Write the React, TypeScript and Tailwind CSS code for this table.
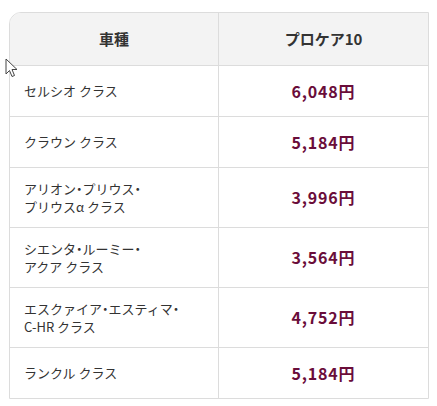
const rows: { name: string[]; price: string }[] = [
  { name: ["セルシオ クラス"], price: "6,048円" },
  { name: ["クラウン クラス"], price: "5,184円" },
  { name: ["アリオン・プリウス・", "プリウスα クラス"], price: "3,996円" },
  { name: ["シエンタ・ルーミー・", "アクア クラス"], price: "3,564円" },
  { name: ["エスクァイア・エスティマ・", "C-HR クラス"], price: "4,752円" },
  { name: ["ランクル クラス"], price: "5,184円" },
];

// 中黒はプロポーショナル幅で詰める
const Line: React.FC<{ text: string }> = ({ text }) => (
  <span className="whitespace-nowrap">
    {text.split("・").map((part, i) => (
      <span key={i}>
        {i > 0 && <span className="[font-feature-settings:'palt']">・</span>}
        {part}
      </span>
    ))}
  </span>
);

const App: React.FC = () => {
  return (
    <div
      className="relative w-[437px] h-[406px] bg-white pt-[12px] pl-[9px]"
      style={{ fontFamily: '"Noto Sans CJK JP", "Noto Sans", sans-serif' }}
    >
      {/* 料金表 */}
      <div className="w-[420px] border border-[#dcdcdc] rounded-tl-[12px] overflow-hidden text-[#333]">
        <div className="grid grid-cols-[209px_1fr] bg-[#f3f3f3] border-b border-[#dcdcdc]">
          <div className="border-r border-[#dcdcdc] py-[16px] text-center text-[15px] font-bold leading-[20px]">車種</div>
          <div className="py-[16px] text-center text-[15px] font-bold leading-[20px]">プロケア10</div>
        </div>
        {rows.map((row, i) => (
          <div
            key={i}
            className={`grid grid-cols-[209px_1fr] ${i < rows.length - 1 ? "border-b border-[#dcdcdc]" : ""}`}
          >
            <div className="border-r border-[#dcdcdc] py-[11.5px] pl-[14px] flex flex-col justify-center text-[13px] leading-[18px]">
              {row.name.map((line) => (
                <Line key={line} text={line} />
              ))}
            </div>
            <div className="flex items-center justify-center py-[11.5px] text-[16px] font-bold leading-[27px] text-[#6a0d3a] tracking-[0.8px]">
              {row.price}
            </div>
          </div>
        ))}
      </div>

      {/* マウスカーソル */}
      <svg className="absolute left-[5px] top-[58px]" width="13" height="20" viewBox="0 0 13 20">
        <path d="M1 1 L1 16 L4.5 12.5 L7 18.5 L9.5 17.5 L7 11.5 L12 11.5 Z" fill="#fff" stroke="#444" strokeWidth="1" strokeLinejoin="round" />
      </svg>
    </div>
  );
};

export default App;
